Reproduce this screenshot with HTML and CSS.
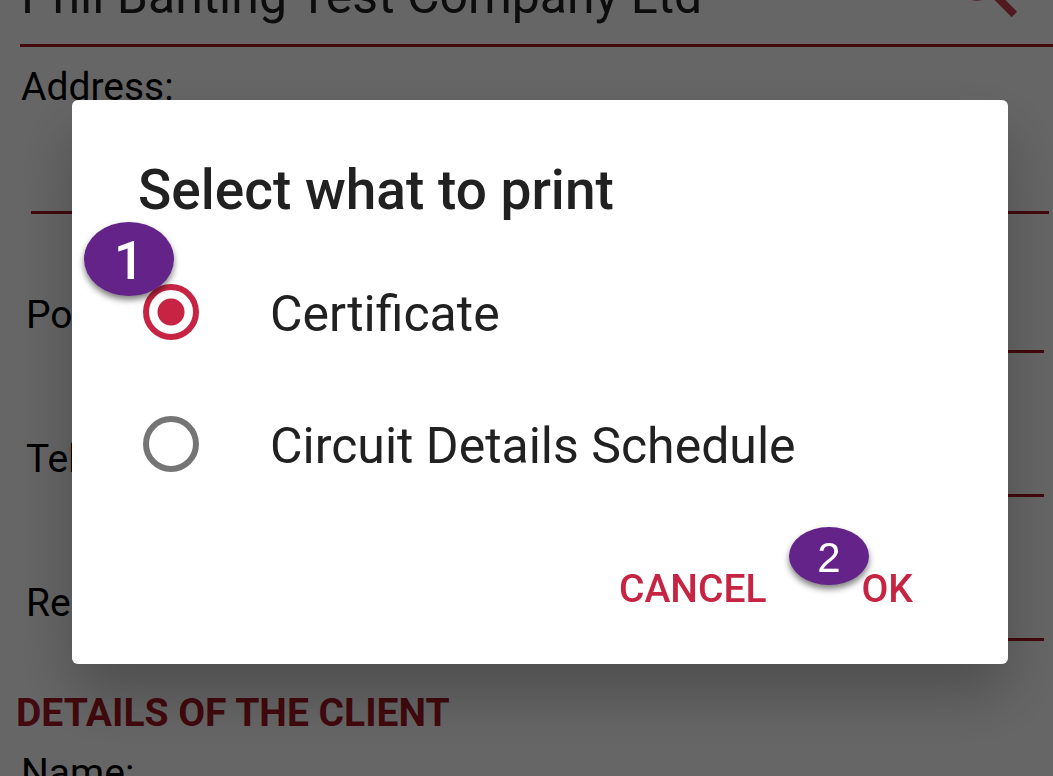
FILE: index.html
```html
<!DOCTYPE html>
<html lang="en">
<head>
  <meta charset="UTF-8">
  <meta name="viewport" content="width=device-width, initial-scale=1.0">
  <title>Select what to print</title>
  <link rel="stylesheet" href="styles.css">
</head>
<body>
  <main class="form">
    <div class="search-field">
      <input type="text" class="company" aria-label="Company" value="Phil Banting Test Company Ltd">
      <button type="button" class="search-btn" aria-label="Search">
        <svg viewBox="0 0 24 24"><path d="M15.5 14h-.79l-.28-.27C15.41 12.59 16 11.11 16 9.5 16 5.91 13.09 3 9.5 3S3 5.91 3 9.5 5.91 16 9.5 16c1.61 0 3.09-.59 4.23-1.57l.27.28v.79l5 4.99L20.49 19l-4.99-5zm-6 0C7.01 14 5 11.99 5 9.5S7.01 5 9.5 5 14 7.01 14 9.5 11.99 14 9.5 14z"/></svg>
      </button>
    </div>
    <label class="label" for="address">Address:</label>
    <input type="text" class="line-input address" id="address">
    <div class="rows">
      <div class="row">
        <label for="po">Po</label>
        <input type="text" class="line-input" id="po">
      </div>
      <div class="row">
        <label for="tel">Tel</label>
        <input type="text" class="line-input" id="tel">
      </div>
      <div class="row">
        <label for="re">Re</label>
        <input type="text" class="line-input" id="re">
      </div>
    </div>
    <h2>DETAILS OF THE CLIENT</h2>
    <p class="label name">Name:</p>
  </main>

  <div class="overlay">
    <form class="dialog" role="dialog" aria-labelledby="dialog-title">
      <h1 id="dialog-title">Select what to print</h1>
      <div class="option">
        <input type="radio" name="print" id="certificate" checked>
        <label for="certificate">Certificate</label>
        <span class="badge badge-one">1</span>
      </div>
      <div class="option">
        <input type="radio" name="print" id="schedule">
        <label for="schedule">Circuit Details Schedule</label>
      </div>
      <div class="actions">
        <button type="button">CANCEL</button>
        <button type="button">OK</button>
        <span class="badge badge-two">2</span>
      </div>
    </form>
  </div>
</body>
</html>
```
FILE: styles.css
```css
* {
  box-sizing: border-box;
}
body {
  margin: 0;
  height: 100vh;
  overflow: hidden;
  background-color: #fff;
  color: #000;
  font-family: Roboto, "Liberation Sans", sans-serif;
  font-size: 39px;
  line-height: 46px;
}
input, button {
  font: inherit;
  margin: 0;
  padding: 0;
  border: none;
  background: none;
}
h1, h2, p {
  margin: 0;
}

/* form behind the dialog, scrolled part of the way down */
.form {
  margin-top: -58px;
}
.search-field {
  display: flex;
  align-items: flex-start;
  margin-left: 20px;
  padding-right: 23px;
  height: 105px;
  border-bottom: 3px solid #a51723;
}
.company {
  flex: 1;
  min-width: 0;
  margin-top: 23px;
  height: 62px;
  padding-left: 1px;
  color: #212121;
  font-size: 50px;
}
.search-btn {
  width: 88px;
  height: 88px;
}
.search-btn svg {
  display: block;
  width: 100%;
  fill: #c64550;
}
.label {
  display: block;
  margin-top: 17px;
  padding-left: 21px;
}
.line-input {
  flex: 1;
  min-width: 0;
  border-bottom: 3px solid #a51723;
}
.address {
  display: block;
  width: calc(100% - 35px);
  height: 104px;
  margin-left: 31px;
}
.rows {
  padding: 0 9px 0 26px;
}
.row {
  display: flex;
  align-items: flex-end;
  gap: 20px;
  height: 144px;
}
.row:first-child {
  height: 139px;
}
.row label {
  padding-bottom: 15px;
}
.row input {
  height: 64px;
}
h2 {
  margin-top: 49px;
  padding-left: 16px;
  color: #a51723;
  font-size: 39px;
  font-weight: 700;
}
.name {
  margin-top: 14px;
}

/* dialog */
.overlay {
  position: fixed;
  inset: 0;
  padding: 100px 45px 0 72px;
  background-color: rgba(0, 0, 0, 0.6);
}
.dialog {
  padding: 58px 95px 52px 66px;
  border-radius: 6px;
  background-color: #fff;
  color: #212121;
  box-shadow: 0 30px 60px rgba(0, 0, 0, 0.25);
}
h1 {
  margin-bottom: 24px;
  font-size: 55px;
  font-weight: 500;
  line-height: 64px;
}
.option {
  position: relative;
  display: flex;
  align-items: center;
  gap: 71px;
  height: 132px;
  padding-left: 5px;
  font-size: 50px;
  line-height: 58px;
}
.option label {
  padding-top: 4px;
}
.option input {
  appearance: none;
  flex: none;
  width: 56px;
  height: 56px;
  border: 6px solid #757575;
  border-radius: 50%;
}
.option input:checked {
  border-color: #c62442;
  background: radial-gradient(circle, #c62442 13px, transparent 14px);
}
.actions {
  position: relative;
  display: flex;
  justify-content: flex-end;
  gap: 95px;
  margin-top: 56px;
}
.actions button {
  color: #c62442;
  font-weight: 500;
}
.badge {
  position: absolute;
  display: flex;
  align-items: center;
  justify-content: center;
  padding-top: 4px;
  border-radius: 50%;
  background-color: #632388;
  color: #fff;
  box-shadow: 0 4px 6px rgba(0, 0, 0, 0.5);
}
.badge-one {
  left: -54px;
  top: -24px;
  width: 90px;
  height: 74px;
  font-size: 54px;
  font-weight: 500;
}
.badge-two {
  right: 44px;
  top: -39px;
  width: 80px;
  height: 58px;
  font-family: "Liberation Sans", Arial, sans-serif;
  font-size: 42px;
}
```
